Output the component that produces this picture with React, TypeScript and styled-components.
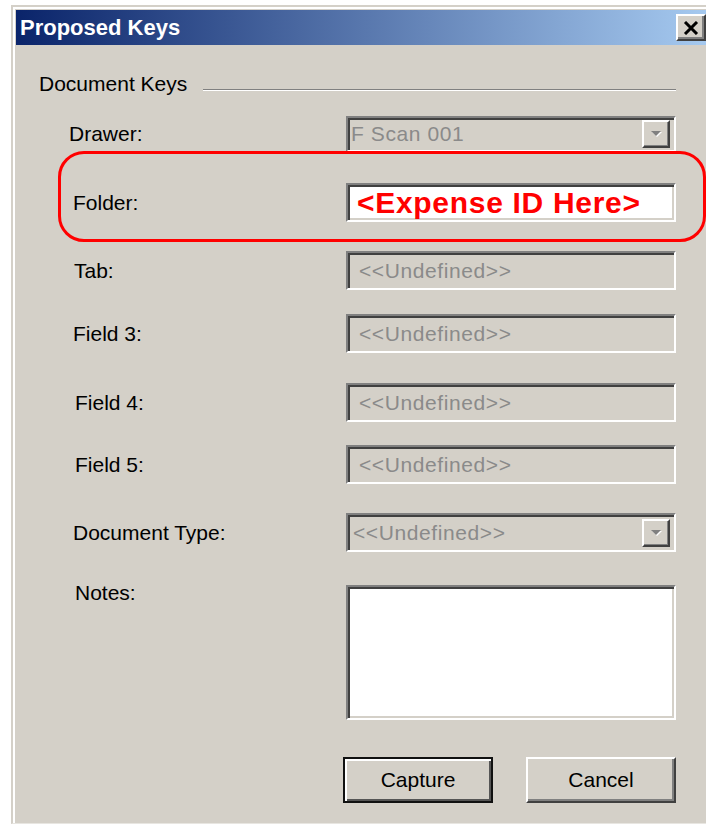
import React from "react";
import styled, { createGlobalStyle } from "styled-components";

const GlobalStyle = createGlobalStyle`
  html, body {
    margin: 0;
    padding: 0;
    background: #fff;
    overflow: hidden;
  }
  body {
    font-family: "Liberation Sans", Arial, sans-serif;
  }
`;

const Window = styled.div`
  position: relative;
  box-sizing: border-box;
  width: 698px;
  margin: 5px 0 0 11px;
  background: #d4d0c8;
  border-top: 2px solid #d4d0c8;
  border-left: 2px solid #d4d0c8;
  border-bottom: 1px solid #e8e6e1;
  box-shadow: inset 2px 2px 0 #fff;
  padding: 3px 0 0 3px;
`;

const TitleBar = styled.div`
  height: 35px;
  display: flex;
  align-items: center;
  justify-content: space-between;
  padding: 0 3px 0 4px;
  background: linear-gradient(to right, #0a246a, #5877ad 50%, #a6caf0);
`;

const Title = styled.span`
  color: #fff;
  font-weight: bold;
  font-size: 22px;
`;

const CloseButton = styled.button`
  box-sizing: border-box;
  width: 30px;
  height: 27px;
  padding: 0;
  display: flex;
  align-items: center;
  justify-content: center;
  background: #d4d0c8;
  border-top: 2px solid #fff;
  border-left: 2px solid #fff;
  border-right: 2px solid #404040;
  border-bottom: 2px solid #404040;
  box-shadow: inset -2px -2px 0 #808080;
`;

const Body = styled.div`
  padding: 27px 33px 20px 0;
`;

const GroupHeader = styled.div`
  display: flex;
  align-items: center;
  gap: 16px;
  padding-left: 23px;
`;

const GroupLabel = styled.span`
  font-size: 21px;
  line-height: 24px;
  color: #000;
`;

const Rule = styled.div`
  flex: 1;
  margin-top: 12px;
  border-top: 1px solid #808080;
  border-bottom: 1px solid #fff;
`;

const Form = styled.div`
  padding-left: 53px;
`;

const Row = styled.div<{ $gap: number; $top?: boolean }>`
  display: grid;
  grid-template-columns: 277px 1fr;
  align-items: ${(p) => (p.$top ? "start" : "center")};
  margin-top: ${(p) => p.$gap}px;
`;

const Label = styled.span<{ $indent?: number; $lift?: number }>`
  font-size: 21px;
  line-height: 24px;
  color: #000;
  padding-left: ${(p) => p.$indent ?? 0}px;
  margin-top: ${(p) => -(p.$lift ?? 0)}px;
`;

const Field = styled.div<{ $h: number; $white?: boolean; $pad?: number }>`
  box-sizing: border-box;
  height: ${(p) => p.$h}px;
  display: flex;
  align-items: center;
  padding-left: ${(p) => p.$pad ?? 11}px;
  background: ${(p) => (p.$white ? "#fff" : "#d4d0c8")};
  border-top: 2px solid #808080;
  border-left: 2px solid #808080;
  border-right: 2px solid #fff;
  border-bottom: 2px solid #fff;
  box-shadow: inset 2px 2px 0 #404040, inset -2px -2px 0 #d4d0c8;
`;

const FieldText = styled.span`
  flex: 1;
  font-size: 21px;
  letter-spacing: 0.6px;
  color: #8a8a8a;
  white-space: nowrap;
`;

const Highlight = styled.span`
  font-size: 30px;
  font-weight: bold;
  letter-spacing: 0.7px;
  color: #f00;
  white-space: nowrap;
`;

const DropButton = styled.div`
  box-sizing: border-box;
  width: 28px;
  height: 28px;
  margin-right: 4px;
  display: flex;
  align-items: center;
  justify-content: center;
  background: #d4d0c8;
  border-top: 2px solid #fff;
  border-left: 2px solid #fff;
  border-right: 2px solid #404040;
  border-bottom: 2px solid #404040;
  box-shadow: inset -1px -1px 0 #808080;
`;

const ButtonRow = styled.div`
  display: flex;
  justify-content: flex-end;
  gap: 33px;
  margin-top: 37px;
`;

const PushButton = styled.button<{ $default?: boolean }>`
  box-sizing: border-box;
  width: 150px;
  height: 46px;
  padding: 0;
  font-family: "Liberation Sans", Arial, sans-serif;
  font-size: 21px;
  color: #000;
  background: #d4d0c8;
  ${(p) =>
    p.$default
      ? `
    border: 2px solid #111;
    box-shadow: inset 2px 2px 0 #fff, inset -2px -2px 0 #555;
  `
      : `
    border-top: 2px solid #fff;
    border-left: 2px solid #fff;
    border-right: 2px solid #404040;
    border-bottom: 2px solid #404040;
    box-shadow: inset -2px -2px 0 #808080;
  `}
`;

const Annotation = styled.div`
  position: absolute;
  left: 45px;
  top: 144px;
  width: 648px;
  height: 91px;
  box-sizing: border-box;
  border: 3px solid #f00;
  border-radius: 26px;
  pointer-events: none;
`;

function CloseIcon() {
  return (
    <svg width="16" height="14" viewBox="0 0 16 14">
      <path d="M2 1 L14 13 M14 1 L2 13" stroke="#000" strokeWidth="3" />
    </svg>
  );
}

function ArrowIcon() {
  return (
    <svg width="13" height="8" viewBox="0 0 13 8">
      <polygon points="2,2 12,2 7,7" fill="#fff" />
      <polygon points="1,1 11,1 6,6" fill="#808080" />
    </svg>
  );
}

const undefinedRows = [
  { label: "Tab:", gap: 29, indent: 5 },
  { label: "Field 3:", gap: 24, indent: 4 },
  { label: "Field 4:", gap: 30, indent: 6 },
  { label: "Field 5:", gap: 23, indent: 6 },
];

export default function App() {
  return (
    <>
      <GlobalStyle />
      <Window>
        <TitleBar>
          <Title>Proposed Keys</Title>
          <CloseButton>
            <CloseIcon />
          </CloseButton>
        </TitleBar>
        <Body>
          <GroupHeader>
            <GroupLabel>Document Keys</GroupLabel>
            <Rule />
          </GroupHeader>
          <Form>
            <Row $gap={20}>
              <Label>Drawer:</Label>
              <Field $h={36} $pad={3}>
                <FieldText>F Scan 001</FieldText>
                <DropButton>
                  <ArrowIcon />
                </DropButton>
              </Field>
            </Row>
            <Row $gap={31}>
              <Label $indent={4}>Folder:</Label>
              <Field $h={39} $white $pad={9}>
                <Highlight>&lt;Expense ID Here&gt;</Highlight>
              </Field>
            </Row>
            {undefinedRows.map((row) => (
              <Row key={row.label} $gap={row.gap}>
                <Label $indent={row.indent}>{row.label}</Label>
                <Field $h={39}>
                  <FieldText>&lt;&lt;Undefined&gt;&gt;</FieldText>
                </Field>
              </Row>
            ))}
            <Row $gap={29}>
              <Label $indent={4}>Document Type:</Label>
              <Field $h={39} $pad={5}>
                <FieldText>&lt;&lt;Undefined&gt;&gt;</FieldText>
                <DropButton>
                  <ArrowIcon />
                </DropButton>
              </Field>
            </Row>
            <Row $gap={33} $top>
              <Label $indent={6} $lift={4}>
                Notes:
              </Label>
              <Field $h={135} $white />
            </Row>
            <ButtonRow>
              <PushButton $default>Capture</PushButton>
              <PushButton>Cancel</PushButton>
            </ButtonRow>
          </Form>
        </Body>
        <Annotation />
      </Window>
    </>
  );
}
